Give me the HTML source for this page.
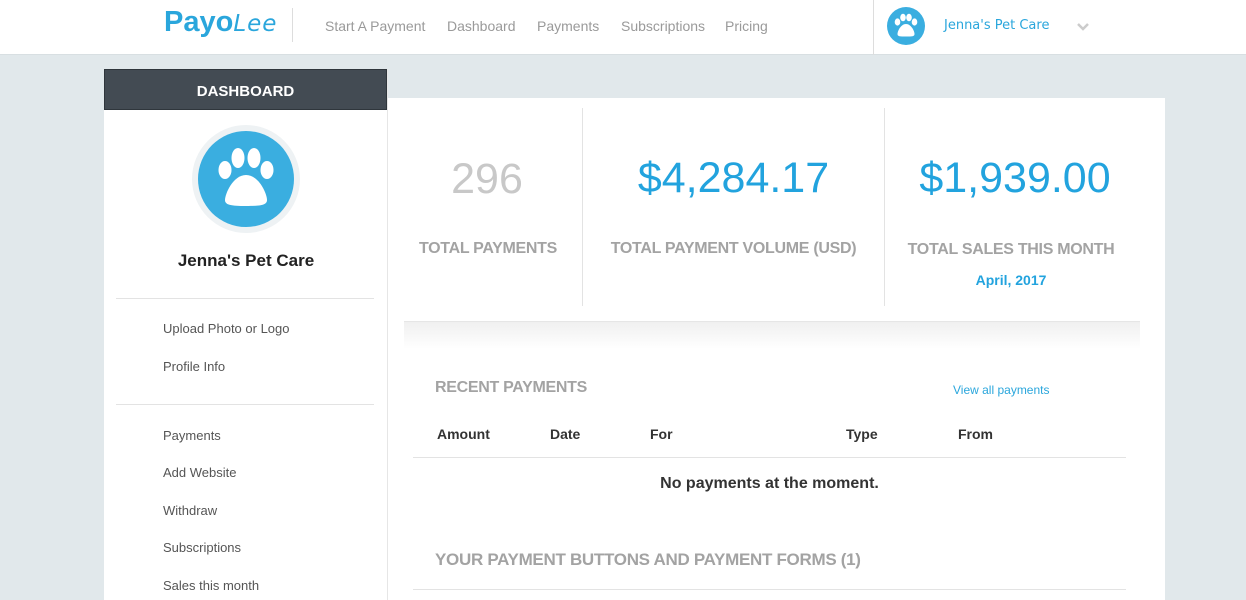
<!DOCTYPE html>
<html><head><style>
*{margin:0;padding:0;box-sizing:border-box}
body{width:1246px;height:600px;overflow:hidden;background:#e1e8eb;font-family:"Liberation Sans",sans-serif;position:relative}
.top{position:absolute;left:0;top:0;width:1246px;height:55px;background:#fff;border-bottom:1px solid #d8dfe2}
.logo{position:absolute;left:164px;top:6px;font-size:29px;color:#2aa6dc;font-weight:bold}
.logo span{font-weight:normal;font-style:italic;font-family:"DejaVu Sans",sans-serif;font-size:23px;letter-spacing:1px}
.vsep{position:absolute;top:8px;width:1px;height:34px;background:#ddd}
.nav{position:absolute;top:18px;font-size:14px;color:#9a9a9a}
.abs{position:absolute}
.side{position:absolute;left:104px;top:69px;width:284px;height:531px;background:#fff;border-right:1px solid #e6e6e6}
.sidehead{height:41px;background:#434b53;color:#fff;font-weight:bold;font-size:15px;text-align:center;line-height:44px;border:1px solid #2f363c}
.side a{position:absolute;left:59px;font-size:13px;color:#555;text-decoration:none}
.hr{position:absolute;left:12px;width:258px;height:1px;background:#e3e3e3}
.main{position:absolute;left:388px;top:98px;width:777px;height:502px;background:#fff}
.num{position:absolute;font-size:43px;text-align:center}
.lbl{position:absolute;font-size:16px;font-weight:bold;color:#a3a3a3;text-align:center;letter-spacing:-0.3px}
.th{position:absolute;top:426px;font-size:14px;font-weight:bold;color:#333}
</style></head><body>
<div class="top">
<div class="logo">Payo<span>Lee</span></div>
<div class="vsep" style="left:292px"></div>
<div class="nav" style="left:325px">Start A Payment</div>
<div class="nav" style="left:447px">Dashboard</div>
<div class="nav" style="left:537px">Payments</div>
<div class="nav" style="left:621px">Subscriptions</div>
<div class="nav" style="left:725px">Pricing</div>
<div class="vsep" style="left:873px;top:0;height:55px"></div>
<svg class="abs" style="left:887px;top:7px" width="38" height="38" viewBox="0 0 38 38"><circle cx="19" cy="19" r="19" fill="#3aaee0"/><ellipse cx="10.5" cy="15" rx="2.8" ry="3.6" fill="#fff"/><ellipse cx="16" cy="10.5" rx="2.8" ry="3.8" fill="#fff"/><ellipse cx="22" cy="10.5" rx="2.8" ry="3.8" fill="#fff"/><ellipse cx="27.5" cy="15" rx="2.8" ry="3.6" fill="#fff"/><path d="M19 17c-5 0-8.5 7-8.5 10 0 2.5 2.5 2.5 8.5 2.5s8.5 0 8.5-2.5c0-3-3.5-10-8.5-10z" fill="#fff"/></svg>
<div class="nav" style="left:944px;color:#2aa6dc;font-family:'DejaVu Sans',sans-serif;font-size:13px">Jenna's Pet Care</div>
<svg class="abs" style="left:1076px;top:22px" width="14" height="10"><path d="M2 2l5 5 5-5" stroke="#ccc" stroke-width="2.5" fill="none"/></svg>
</div>

<div class="side">
<div class="sidehead">DASHBOARD</div>
<svg class="abs" style="left:87px;top:55px" width="110" height="110" viewBox="0 0 110 110"><circle cx="55" cy="55" r="54" fill="#eef2f4"/><circle cx="55" cy="55" r="48" fill="#3aaee0"/><ellipse cx="34" cy="46" rx="6.5" ry="9" fill="#fff"/><ellipse cx="47" cy="34" rx="6.5" ry="10" fill="#fff"/><ellipse cx="63" cy="34" rx="6.5" ry="10" fill="#fff"/><ellipse cx="76" cy="46" rx="6.5" ry="9" fill="#fff"/><path d="M55 51c-13 0-21 19-21 25 0 5 6 6 21 6s21-1 21-6c0-6-8-25-21-25z" fill="#fff"/></svg>
<div class="abs" style="left:0;width:284px;top:182px;text-align:center;font-size:17px;font-weight:bold;color:#222">Jenna's Pet Care</div>
<div class="hr" style="top:229px"></div>
<a style="top:252px">Upload Photo or Logo</a>
<a style="top:290px">Profile Info</a>
<div class="hr" style="top:335px"></div>
<a style="top:359px">Payments</a>
<a style="top:396px">Add Website</a>
<a style="top:434px">Withdraw</a>
<a style="top:471px">Subscriptions</a>
<a style="top:509px">Sales this month</a>
</div>

<div class="main"></div>
<div class="abs" style="left:582px;top:108px;width:1px;height:198px;background:#e3e3e3"></div>
<div class="abs" style="left:884px;top:108px;width:1px;height:198px;background:#e3e3e3"></div>
<div class="num" style="left:390px;width:194px;top:155px;color:#c8c8c8">296</div>
<div class="num" style="left:583px;width:301px;top:154px;color:#22a3de">$4,284.17</div>
<div class="num" style="left:885px;width:260px;top:154px;color:#22a3de">$1,939.00</div>
<div class="lbl" style="left:388px;width:200px;top:240px">TOTAL PAYMENTS</div>
<div class="lbl" style="left:583px;width:301px;top:240px">TOTAL PAYMENT VOLUME (USD)</div>
<div class="lbl" style="left:885px;width:252px;top:241px">TOTAL SALES THIS MONTH</div>
<div class="abs" style="left:885px;width:252px;top:272px;text-align:center;font-size:14px;font-weight:bold;color:#22a3de">April, 2017</div>
<div class="abs" style="left:404px;top:321px;width:736px;height:28px;background:linear-gradient(#f0f0f0,#fff);border-top:1px solid #e6e6e6"></div>
<div class="lbl" style="left:435px;top:379px;text-align:left">RECENT PAYMENTS</div>
<div class="abs" style="left:953px;top:383px;font-size:12px;color:#2aa6dc">View all payments</div>
<div class="th" style="left:437px">Amount</div>
<div class="th" style="left:550px">Date</div>
<div class="th" style="left:650px">For</div>
<div class="th" style="left:846px">Type</div>
<div class="th" style="left:958px">From</div>
<div class="abs" style="left:413px;top:457px;width:713px;height:1px;background:#e3e3e3"></div>
<div class="abs" style="left:413px;width:713px;top:475px;text-align:center;font-size:16px;font-weight:bold;color:#333">No payments at the moment.</div>
<div class="lbl" style="left:435px;top:550px;text-align:left;font-size:17px">YOUR PAYMENT BUTTONS AND PAYMENT FORMS (1)</div>
<div class="abs" style="left:413px;top:589px;width:713px;height:1px;background:#e3e3e3"></div>
</body></html>
